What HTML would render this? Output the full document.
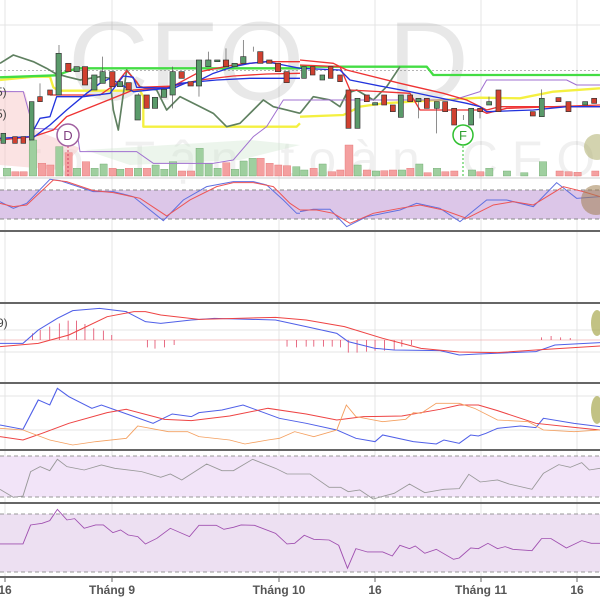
<!DOCTYPE html><html><head><meta charset="utf-8"><style>body{margin:0;background:#fff}svg{display:block}</style></head><body>
<svg width="600" height="600" viewBox="0 0 600 600" xmlns="http://www.w3.org/2000/svg" font-family="Liberation Sans, sans-serif">
<rect width="600" height="600" fill="#fff"/>
<!-- grid -->
<g stroke="#e4e4e4" stroke-width="1">
<line x1="5" y1="0" x2="5" y2="578"/><line x1="112" y1="0" x2="112" y2="578"/><line x1="279" y1="0" x2="279" y2="578"/><line x1="375" y1="0" x2="375" y2="578"/><line x1="481" y1="0" x2="481" y2="578"/><line x1="577" y1="0" x2="577" y2="578"/>
<line x1="0" y1="25" x2="600" y2="25"/><line x1="0" y1="330" x2="600" y2="330"/><line x1="0" y1="352" x2="600" y2="352"/><line x1="0" y1="396" x2="600" y2="396"/><line x1="0" y1="430" x2="600" y2="430"/>
</g>
<!-- watermark -->
<text x="68" y="100" font-size="112" fill="#000" fill-opacity="0.09">CFO</text>
<text x="388" y="100" font-size="112" fill="#000" fill-opacity="0.09">D</text>
<text x="25" y="176" font-size="50" fill="#000" fill-opacity="0.06" letter-spacing="14">ro  Tận toàn CFO</text>
<!-- pink kumo -->
<path d="M0,90 L25,92 L35,130 L80,148 L60,170 L0,165Z" fill="#f8c8c8" opacity="0.5"/>
<path d="M85,150 L250,140 L300,145 L240,160 L130,165Z" fill="#cfe5cf" opacity="0.4"/>
<!-- volume left (zoom coords) -->
<g transform="scale(0.3333)">
<g fill="#f4a0a0" stroke="#e06060" stroke-width="1">
<rect x="35" y="515" width="22" height="13"/><rect x="60" y="515" width="22" height="13"/><rect x="115" y="490" width="22" height="38"/><rect x="140" y="495" width="22" height="33"/><rect x="195" y="458" width="22" height="70"/><rect x="247" y="485" width="22" height="43"/><rect x="327" y="505" width="22" height="23"/><rect x="376" y="505" width="22" height="23"/><rect x="430" y="505" width="22" height="23"/><rect x="535" y="513" width="22" height="15"/><rect x="562" y="513" width="22" height="15"/><rect x="668" y="488" width="22" height="40"/><rect x="771" y="475" width="22" height="53"/><rect x="798" y="490" width="22" height="38"/><rect x="824" y="495" width="22" height="33"/><rect x="850" y="497" width="22" height="31"/>
</g>
<g fill="#9fcf9f" stroke="#5a9a5a" stroke-width="1">
<rect x="10" y="505" width="22" height="23"/><rect x="88" y="420" width="22" height="108"/><rect x="167" y="440" width="22" height="88"/><rect x="220" y="505" width="22" height="23"/><rect x="273" y="505" width="22" height="23"/><rect x="300" y="492" width="22" height="36"/><rect x="350" y="508" width="22" height="20"/><rect x="403" y="505" width="22" height="23"/><rect x="456" y="495" width="22" height="33"/><rect x="482" y="508" width="22" height="20"/><rect x="508" y="485" width="22" height="43"/><rect x="588" y="445" width="22" height="83"/><rect x="615" y="490" width="22" height="38"/><rect x="642" y="505" width="22" height="23"/><rect x="694" y="508" width="22" height="20"/><rect x="720" y="483" width="22" height="45"/><rect x="747" y="475" width="22" height="53"/><rect x="878" y="500" width="22" height="28"/>
</g>
</g>
<g transform="translate(300,0) scale(0.3333)">
<g fill="#f4a0a0" stroke="#e06060" stroke-width="1">
<rect x="30" y="505" width="22" height="23"/><rect x="85" y="515" width="22" height="13"/><rect x="110" y="510" width="22" height="18"/><rect x="135" y="435" width="24" height="93"/><rect x="190" y="510" width="22" height="18"/><rect x="242" y="512" width="22" height="16"/><rect x="268" y="510" width="22" height="18"/><rect x="320" y="505" width="22" height="23"/><rect x="372" y="518" width="22" height="10"/><rect x="425" y="515" width="22" height="13"/><rect x="452" y="513" width="22" height="15"/><rect x="530" y="515" width="22" height="13"/><rect x="768" y="513" width="22" height="15"/><rect x="795" y="515" width="22" height="13"/><rect x="822" y="517" width="22" height="11"/><rect x="875" y="513" width="22" height="15"/>
</g>
<g fill="#9fcf9f" stroke="#5a9a5a" stroke-width="1">
<rect x="2" y="510" width="22" height="18"/><rect x="57" y="492" width="22" height="36"/><rect x="162" y="495" width="22" height="33"/><rect x="217" y="513" width="22" height="15"/><rect x="295" y="510" width="22" height="18"/><rect x="347" y="492" width="22" height="36"/><rect x="400" y="505" width="22" height="23"/><rect x="505" y="510" width="22" height="18"/><rect x="557" y="505" width="22" height="23"/><rect x="610" y="513" width="22" height="15"/><rect x="662" y="518" width="22" height="10"/><rect x="718" y="485" width="22" height="43"/>
</g>
</g>
<line x1="0" y1="178" x2="600" y2="178" stroke="#ccc"/>
<!-- top lines left -->
<g transform="scale(0.3333)" fill="none" stroke-linejoin="round">
<line x1="0" y1="212" x2="900" y2="212" stroke="#888" stroke-width="2" stroke-dasharray="6,6"/>
<polyline points="0,240 100,230 150,230 160,262 175,272 420,272 430,290 430,380 890,380 900,370" stroke="#f4f040" stroke-width="7"/>
<polyline points="0,232 170,226 230,205 900,205" stroke="#44dd44" stroke-width="7"/>
<polyline points="0,190 40,165 100,185 140,205 165,220 200,230 240,240 300,230 330,235 340,330 355,390 380,210 420,260 470,270 500,330 540,290 600,320 640,340 680,380 720,370 760,330 790,300 820,320 860,330 900,340" stroke="#5f8060" stroke-width="5"/>
<polyline points="0,275 70,275 100,385 230,390 240,455 410,455 460,490 640,490 700,480 760,410 800,380 850,300 900,300" stroke="#a070d0" stroke-width="3"/>
<polyline points="0,420 100,410 160,390 200,350 300,310 400,270 500,262 600,240 700,228 800,222 900,220" stroke="#ee3333" stroke-width="4"/>
<polyline points="150,285 300,285 350,250 380,212 410,245 420,262 520,258 600,215 700,195 800,185 900,185" stroke="#ee3333" stroke-width="4"/>
<polyline points="0,415 90,410 120,355 150,350 170,290 250,290 330,280 370,228 400,232 410,262 520,265 560,248 590,245 640,220 700,200 750,190 800,185 850,195 900,205" stroke="#2233dd" stroke-width="4"/>
<polyline points="90,420 150,375 200,330 260,280 300,250 330,235 400,275 500,265 540,250 650,240 750,235 900,235" stroke="#2233dd" stroke-width="4"/>
</g>
<g transform="translate(300,0) scale(0.3333)" fill="none" stroke-linejoin="round">
<line x1="0" y1="212" x2="900" y2="212" stroke="#888" stroke-width="2" stroke-dasharray="6,6"/>
<polyline points="0,350 130,345 180,320 250,310 420,300 540,293 660,295 760,275 900,265" stroke="#f4f040" stroke-width="7"/>
<polyline points="0,200 380,200 400,225 900,225" stroke="#44dd44" stroke-width="7"/>
<polyline points="0,340 40,290 90,300 120,320 140,280 170,270 220,300 260,260 300,200" stroke="#5f8060" stroke-width="5"/>
<polyline points="0,300 460,300 540,275 560,240 800,240 830,255 900,255" stroke="#a070d0" stroke-width="3"/>
<polyline points="0,180 100,190 140,210 300,250 430,280 500,300 560,330 600,320 900,320" stroke="#ee3333" stroke-width="4"/>
<polyline points="0,195 120,200 150,270 330,280 360,330 540,330 560,340 620,325 900,315" stroke="#ee3333" stroke-width="4"/>
<polyline points="0,205 120,210 150,240 250,260 330,275 400,290 500,310 540,320 560,335 700,330 800,320 900,320" stroke="#2233dd" stroke-width="4"/>
</g>
<!-- candles left -->
<g transform="scale(0.3333)" stroke="#333" stroke-width="2">
<g stroke="#555"><line x1="120" y1="250" x2="120" y2="290"/><line x1="177" y1="135" x2="177" y2="160"/><line x1="308" y1="170" x2="308" y2="215"/><line x1="518" y1="200" x2="518" y2="325"/><line x1="597" y1="258" x2="597" y2="290"/><line x1="625" y1="155" x2="625" y2="180"/><line x1="678" y1="145" x2="678" y2="180"/><line x1="730" y1="120" x2="730" y2="170"/><line x1="760" y1="155" x2="760" y2="140"/><line x1="415" y1="360" x2="415" y2="280"/></g>
<rect x="3" y="400" width="14" height="30" fill="#5a9a6a"/><rect x="38" y="410" width="14" height="20" fill="#d04030"/><rect x="63" y="410" width="14" height="20" fill="#d04030"/><rect x="88" y="305" width="14" height="115" fill="#5a9a6a"/><rect x="113" y="290" width="14" height="15" fill="#d04030"/><rect x="143" y="270" width="14" height="15" fill="#d04030"/><rect x="168" y="160" width="16" height="125" fill="#5a9a6a"/><rect x="197" y="190" width="16" height="25" fill="#d04030"/><rect x="222" y="200" width="16" height="15" fill="#5a9a6a"/><rect x="247" y="200" width="16" height="55" fill="#d04030"/><rect x="275" y="225" width="16" height="45" fill="#5a9a6a"/><rect x="300" y="215" width="16" height="35" fill="#5a9a6a"/><rect x="329" y="215" width="16" height="45" fill="#d04030"/><rect x="352" y="245" width="16" height="15" fill="#5a9a6a"/><rect x="378" y="248" width="16" height="22" fill="#d04030"/><rect x="405" y="285" width="16" height="75" fill="#5a9a6a"/><rect x="432" y="285" width="16" height="40" fill="#d04030"/><rect x="457" y="292" width="16" height="33" fill="#5a9a6a"/><rect x="484" y="268" width="16" height="24" fill="#5a9a6a"/><rect x="510" y="215" width="16" height="70" fill="#5a9a6a"/><rect x="537" y="215" width="16" height="20" fill="#d04030"/><rect x="564" y="245" width="16" height="13" fill="#d04030"/><rect x="589" y="180" width="16" height="78" fill="#5a9a6a"/><rect x="617" y="180" width="16" height="20" fill="#5a9a6a"/><rect x="644" y="180" width="16" height="5" fill="#5a9a6a"/><rect x="670" y="180" width="16" height="20" fill="#d04030"/><rect x="696" y="190" width="16" height="10" fill="#5a9a6a"/><rect x="722" y="170" width="16" height="20" fill="#5a9a6a"/><rect x="773" y="155" width="16" height="35" fill="#d04030"/><rect x="800" y="180" width="16" height="10" fill="#d04030"/><rect x="826" y="190" width="16" height="25" fill="#d04030"/><rect x="852" y="215" width="16" height="33" fill="#d04030"/>
</g>
<g transform="translate(300,0) scale(0.3333)" stroke="#333" stroke-width="2">
<g stroke="#555"><line x1="355" y1="305" x2="355" y2="355"/><line x1="410" y1="325" x2="410" y2="400"/><line x1="567" y1="290" x2="567" y2="305"/><line x1="725" y1="268" x2="725" y2="295"/><line x1="540" y1="335" x2="540" y2="355"/><line x1="490" y1="345" x2="490" y2="360"/></g>
<rect x="5" y="200" width="14" height="35" fill="#5a9a6a"/><rect x="31" y="200" width="14" height="25" fill="#d04030"/><rect x="60" y="225" width="14" height="15" fill="#5a9a6a"/><rect x="85" y="200" width="14" height="35" fill="#d04030"/><rect x="113" y="225" width="14" height="20" fill="#d04030"/><rect x="138" y="270" width="15" height="115" fill="#d04030"/><rect x="165" y="295" width="15" height="90" fill="#5a9a6a"/><rect x="193" y="285" width="15" height="20" fill="#d04030"/><rect x="218" y="308" width="15" height="7" fill="#5a9a6a"/><rect x="245" y="285" width="15" height="30" fill="#d04030"/><rect x="271" y="315" width="15" height="20" fill="#d04030"/><rect x="295" y="285" width="15" height="67" fill="#5a9a6a"/><rect x="323" y="285" width="15" height="20" fill="#d04030"/><rect x="348" y="295" width="15" height="10" fill="#5a9a6a"/><rect x="373" y="295" width="15" height="30" fill="#d04030"/><rect x="403" y="305" width="15" height="20" fill="#5a9a6a"/><rect x="428" y="305" width="15" height="30" fill="#d04030"/><rect x="455" y="325" width="15" height="50" fill="#d04030"/><rect x="506" y="325" width="15" height="50" fill="#5a9a6a"/><rect x="533" y="325" width="15" height="10" fill="#d04030"/><rect x="560" y="305" width="15" height="10" fill="#5a9a6a"/><rect x="588" y="270" width="15" height="65" fill="#d04030"/><rect x="691" y="335" width="15" height="13" fill="#d04030"/><rect x="718" y="295" width="15" height="55" fill="#5a9a6a"/><rect x="768" y="293" width="15" height="12" fill="#d04030"/><rect x="798" y="305" width="15" height="30" fill="#d04030"/><rect x="848" y="305" width="15" height="10" fill="#5a9a6a"/><rect x="875" y="295" width="15" height="15" fill="#d04030"/>
</g>
<!-- markers -->
<line x1="68" y1="146" x2="68" y2="176" stroke="#d04060" stroke-dasharray="2,2"/>
<circle cx="68" cy="135" r="11" fill="#fff" stroke="#a060a0" stroke-width="1.5"/><text x="68" y="140" font-size="13" text-anchor="middle" fill="#804080">D</text>
<line x1="463" y1="146" x2="463" y2="176" stroke="#30c030" stroke-dasharray="2,2"/>
<circle cx="463" cy="135" r="10" fill="#fff" stroke="#30c030" stroke-width="1.5"/><text x="463" y="140" font-size="13" text-anchor="middle" fill="#30a030">F</text>
<text x="-4" y="96" font-size="12" fill="#444">5)</text><text x="-4" y="118" font-size="12" fill="#444">5)</text>
<!-- stoch panel -->
<rect x="0" y="190" width="600" height="29" fill="#dcc6e8"/>
<line x1="0" y1="190" x2="600" y2="190" stroke="#888" stroke-dasharray="4,3"/><line x1="0" y1="219" x2="600" y2="219" stroke="#888" stroke-dasharray="4,3"/>
<g transform="scale(0.3333)" fill="none" stroke-width="3">
<polyline points="0,605 40,625 80,610 150,538 180,542 280,575 340,575 400,590 490,662 550,600 620,560 700,545 760,545 800,555 850,600 890,640 900,640" stroke="#6070e0"/>
<polyline points="0,610 40,620 80,615 160,540 200,545 280,572 340,578 420,595 500,648 570,600 650,560 700,548 760,548 820,560 870,610 900,630" stroke="#ee5555"/>
</g>
<g transform="translate(300,0) scale(0.3333)" fill="none" stroke-width="3">
<polyline points="0,635 40,628 90,628 140,680 200,650 300,630 350,610 420,625 480,665 560,600 620,600 700,620 770,548 830,595 900,590" stroke="#6070e0"/>
<polyline points="0,630 50,630 100,640 150,670 220,640 300,625 360,615 430,630 500,655 580,615 640,605 700,615 790,560 850,575 900,590" stroke="#ee5555"/>
</g>
<circle cx="596" cy="200" r="15" fill="#a08050" opacity="0.55"/>
<circle cx="597" cy="147" r="13" fill="#a8a860" opacity="0.5"/>
<line x1="0" y1="231" x2="600" y2="231" stroke="#666" stroke-width="2"/>
<!-- panels -->
<g stroke="#666" stroke-width="2"><line x1="0" y1="303" x2="600" y2="303"/><line x1="0" y1="383" x2="600" y2="383"/><line x1="0" y1="450" x2="600" y2="450"/><line x1="0" y1="503" x2="600" y2="503"/><line x1="0" y1="577" x2="600" y2="577"/></g>
<rect x="0" y="456" width="600" height="41" fill="#f2e4f8"/>
<line x1="0" y1="456" x2="600" y2="456" stroke="#999" stroke-dasharray="4,3"/><line x1="0" y1="497" x2="600" y2="497" stroke="#999" stroke-dasharray="4,3"/>
<rect x="0" y="514" width="600" height="58" fill="#ede0f2"/>
<line x1="0" y1="514" x2="600" y2="514" stroke="#999" stroke-dasharray="4,3"/><line x1="0" y1="572" x2="600" y2="572" stroke="#999" stroke-dasharray="4,3"/>
<text x="-3" y="327" font-size="12" fill="#444">9)</text>
<g transform="translate(0,290) scale(0.3827,0.3333)" fill="none" stroke-width="3">
<line x1="0" y1="150" x2="1568" y2="150" stroke="#f0b0b0" stroke-width="2"/>
<path d="M85,150V130M105,150V120M130,150V110M155,150V100M178,150V92M200,150V92M222,150V102M245,150V115M270,150V122M292,150V135M385,150V172M405,150V176M430,150V172M455,150V165M750,150V170M775,150V172M800,150V170M820,150V170M845,150V170M868,150V170M890,150V172M910,150V188M933,150V188M958,150V185M980,150V182M1005,150V182M1030,150V180M1050,150V170M1075,150V165M1415,150V142M1440,150V138M1465,150V142M1490,150V144" stroke="#e04060" stroke-width="2"/>
<polyline points="0,160 60,160 100,120 150,85 190,62 260,55 330,65 380,95 420,100 500,90 560,85 720,90 800,110 880,130 910,155 980,175 1030,180 1150,182 1200,195 1250,192 1400,185 1450,165 1568,158" stroke="#5060e8"/>
<polyline points="0,170 100,160 180,135 280,80 350,65 380,65 420,75 520,88 620,85 720,82 800,90 900,110 1000,145 1100,175 1200,186 1300,188 1400,180 1568,168" stroke="#ee4444"/>
<polyline points="0,405 60,418 100,330 130,345 150,295 180,320 240,355 265,345 400,400 450,372 500,380 520,368 580,360 635,345 730,385 800,400 880,420 930,445 980,455 1000,435 1080,455 1140,462 1160,450 1200,460 1230,435 1250,438 1270,430 1300,415 1360,408 1400,413 1420,385 1500,400 1568,410" stroke="#5060e8"/>
<polyline points="0,440 60,450 110,430 180,400 280,368 330,358 430,388 500,392 600,378 700,355 800,372 880,390 950,380 1050,378 1150,358 1200,345 1250,345 1300,362 1400,400 1500,412 1568,420" stroke="#ee4444"/>
<polyline points="0,415 60,420 130,450 190,465 250,455 330,445 360,408 440,425 490,425 520,440 600,450 640,462 700,450 730,445 770,425 820,440 880,420 905,345 930,380 1000,395 1060,388 1080,368 1100,370 1140,340 1200,340 1240,355 1300,390 1380,395 1420,420 1500,425 1568,420" stroke="#f4a060" stroke-width="2.5"/>
<polyline points="0,598 35,622 60,618 80,545 105,530 130,542 150,508 175,530 220,540 265,525 300,535 370,545 420,562 445,552 475,570 540,522 580,542 610,542 660,508 720,535 750,552 810,552 860,592 890,592 910,605 940,600 975,627 1030,610 1070,582 1110,608 1160,598 1200,596 1225,553 1255,576 1300,570 1330,582 1390,598 1420,550 1460,524 1490,532 1520,518 1540,540 1568,535" stroke="#999" stroke-width="2.5"/>
<polyline points="0,762 30,762 60,762 80,705 110,700 130,692 150,658 175,690 195,686 220,715 250,705 270,705 295,728 315,720 335,735 360,740 380,762 410,745 445,715 495,740 520,706 565,706 585,718 610,712 630,705 665,706 720,730 750,762 770,760 795,736 820,748 860,750 885,766 908,835 930,776 960,786 1000,786 1025,798 1045,766 1070,776 1085,768 1110,790 1140,778 1185,808 1200,804 1230,774 1250,776 1275,760 1300,776 1320,770 1340,778 1390,782 1415,746 1440,746 1480,774 1520,752 1545,760 1568,760" stroke="#a050b0" stroke-width="2.5"/>
</g>
<ellipse cx="597" cy="323" rx="6" ry="13" fill="#a8a850" opacity="0.7"/>
<ellipse cx="597" cy="410" rx="6" ry="14" fill="#a8a850" opacity="0.7"/>
<!-- x labels -->
<g font-size="12" font-weight="bold" fill="#555" text-anchor="middle">
<text x="5" y="594">16</text><text x="112" y="594">Tháng 9</text><text x="279" y="594">Tháng 10</text><text x="375" y="594">16</text><text x="481" y="594">Tháng 11</text><text x="577" y="594">16</text>
</g>
<g stroke="#666"><line x1="5" y1="577" x2="5" y2="582"/><line x1="112" y1="577" x2="112" y2="582"/><line x1="279" y1="577" x2="279" y2="582"/><line x1="375" y1="577" x2="375" y2="582"/><line x1="481" y1="577" x2="481" y2="582"/><line x1="577" y1="577" x2="577" y2="582"/></g>
</svg>
</body></html>
